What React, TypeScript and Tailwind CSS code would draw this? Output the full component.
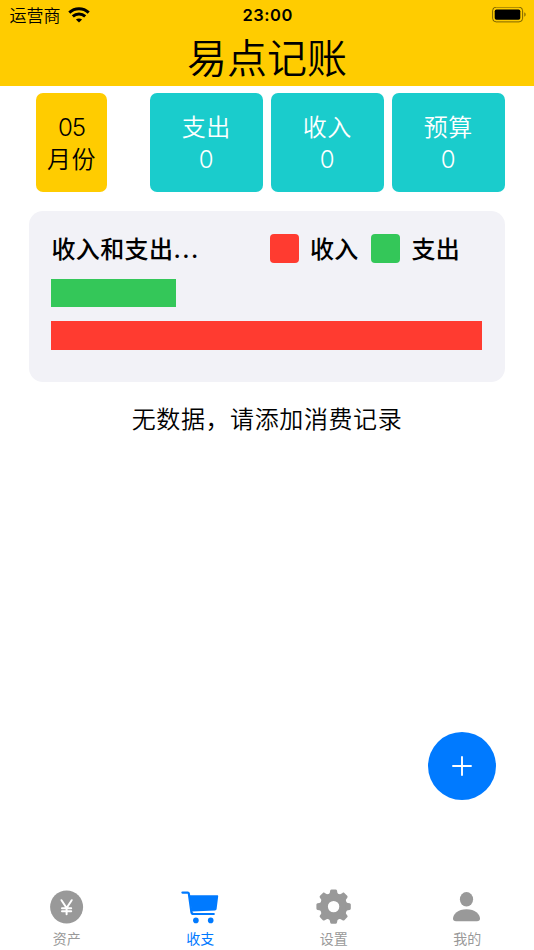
const stats = [
  { label: "支出", value: 0 },
  { label: "收入", value: 0 },
  { label: "预算", value: 0 },
];

function WifiIcon() {
  return (
    <svg width="22" height="16" viewBox="0 0 22 16" fill="none" stroke="black" strokeWidth="3">
      <path d="M1.3 5.6C6.8.4 15.2.4 20.7 5.6" />
      <path d="M4.8 9.4c3.6-3.3 8.8-3.3 12.4 0" />
      <path d="M11 15.6 7.9 12.5c1.7-1.5 4.5-1.5 6.2 0z" fill="black" stroke="none" />
    </svg>
  );
}

function BatteryIcon() {
  return (
    <svg width="34" height="16" viewBox="0 0 34 16">
      <rect x=".6" y=".1" width="30" height="14.8" rx="3.6" fill="none" stroke="black" strokeOpacity=".5" />
      <rect x="2.7" y="2.4" width="25.6" height="10.3" rx="1.8" />
      <path d="M32.3 5.3c1.8.8 1.8 3.6 0 4.4z" fillOpacity=".5" />
    </svg>
  );
}

function YenIcon() {
  return (
    <svg width="36" height="36" viewBox="0 0 36 36">
      <circle cx="17.6" cy="18" r="16.5" fill="#999" />
      <path
        d="m12.5 11.2 5.1 7.8 5.1-7.8M17.6 19v6.3M13 19.200h9.200M13 22.300h9.200"
        fill="none"
        stroke="white"
        strokeWidth="2"
        strokeLinecap="round"
      />
    </svg>
  );
}

function CartIcon() {
  return (
    <svg width="38" height="36" viewBox="0 0 38 36" fill="#007aff">
      <path d="M8 6.2h28.2c.7 0 1.1.5 1 1.1l-1.6 12.7c-.1.8-.8 1.4-1.6 1.500L11 22.600z" />
      <path
        d="M1.400 3.600h5.400c.6 0 .9.300 1 .8l2.600 18.600c.2 1.400.9 2 2.200 2h20.200"
        fill="none"
        stroke="#007aff"
        strokeWidth="2.2"
        strokeLinecap="round"
      />
      <circle cx="14.9" cy="31.4" r="2.8" />
      <circle cx="29.7" cy="31.4" r="2.8" />
    </svg>
  );
}

function GearIcon() {
  return (
    <svg width="36" height="36" viewBox="-17.6 -17.6 36 36">
      <circle r="9.7" fill="none" stroke="#999" strokeWidth="8" />
      {[0, 45, 90, 135, 180, 225, 270, 315].map((angle) => (
        <path
          key={angle}
          d="M-5.4-11.8c1-.6 1.5-1.4 1.7-2.6l.3-1.6c.2-.8.7-1.2 1.4-1.2h4c.7 0 1.2.4 1.4 1.2l.3 1.6c.2 1.2.7 2 1.7 2.6z"
          transform={`rotate(${angle})`}
          fill="#999"
        />
      ))}
    </svg>
  );
}

function PersonIcon() {
  return (
    <svg width="36" height="36" viewBox="0 0 36 36" fill="#999">
      <ellipse cx="17.5" cy="10.3" rx="6.6" ry="7.2" />
      <path d="M7 32.3c-2 0-3-.8-3-2.7 0-4.3 5-9.4 13.5-9.4s13.5 5.1 13.5 9.4c0 1.9-1 2.7-3 2.7z" />
    </svg>
  );
}

const tabs = [
  { label: "资产", icon: <YenIcon /> },
  { label: "收支", icon: <CartIcon />, active: true },
  { label: "设置", icon: <GearIcon /> },
  { label: "我的", icon: <PersonIcon /> },
];

export default function App() {
  return (
    <div className="relative flex h-[950px] w-[534px] flex-col overflow-hidden bg-white font-['Inter','Noto_Sans_CJK_SC',sans-serif] text-black">
      <header className="h-[85.5px] shrink-0 bg-[#ffcc00]">
        <div className="grid h-[29px] grid-cols-3 items-center pr-2 pl-[9.5px]">
          <div className="flex items-center gap-[7px] text-[17px] leading-none">
            <span className="pt-[3px] font-[350]">运营商</span>
            <WifiIcon />
          </div>
          <span className="pt-0.5 text-center text-[16.5px] leading-none font-semibold tracking-[0.5px]">23:00</span>
          <div className="flex justify-end">
            <BatteryIcon />
          </div>
        </div>
        <h1 className="pt-[2px] text-center text-[40px] leading-[56px] font-[350]">易点记账</h1>
      </header>

      <section className="mt-[7.5px] flex h-[99px] shrink-0 pl-9 text-center text-[24px] leading-8 font-[350] tracking-[0.4px]">
        <div className="mr-[42.5px] flex w-[71px] flex-col justify-center rounded-[7px] bg-[#ffcc00] pt-[2px]">
          <span className="tracking-[-1px]">05</span>
          <span>月份</span>
        </div>
        <div className="flex gap-[7.5px] text-white">
          {stats.map((s) => (
            <div key={s.label} className="flex w-[113.5px] flex-col justify-center rounded-[7px] bg-[#1acccc] pt-[2px]">
              <span>{s.label}</span>
              <span>{s.value}</span>
            </div>
          ))}
        </div>
      </section>

      <section className="mr-[29px] ml-[28.5px] mt-[19px] h-[171px] shrink-0 rounded-[14px] bg-[#f2f2f7] px-[22.9px] pt-[23px]">
        <div className="flex h-[29px] items-center text-[24px] font-medium tracking-[0.4px]">
          <span className="w-[219px] pt-[2px]">
            收入和支出<span className="tracking-[1.5px]">...</span>
          </span>
          <span className="h-[28.5px] w-[28.5px] rounded-[4px] bg-[#ff3b30]" />
          <span className="ml-[11px] w-[61.5px] pt-[2px]">收入</span>
          <span className="h-[28.5px] w-[28.5px] rounded-[4px] bg-[#34c759]" />
          <span className="ml-[11.5px] pt-[2px]">支出</span>
        </div>
        <div className="mt-[15.5px] h-[28.5px] w-[125px] bg-[#34c759]" />
        <div className="mt-[14px] h-[28.5px] w-[431px] bg-[#ff3b30]" />
      </section>

      <p className="mt-[20px] text-center text-[24px] leading-9 font-[350] tracking-[0.6px]">无数据，请添加消费记录</p>

      <button className="absolute top-[732px] left-[428.4px] flex h-[68px] w-[68px] items-center justify-center rounded-full bg-[#007aff]">
        <svg width="20" height="20" viewBox="0 0 20 20" stroke="white" strokeWidth="1.9" strokeLinecap="round">
          <path d="M10 1v18M1 10h18" />
        </svg>
      </button>

      <nav className="mt-auto grid h-[61.5px] grid-cols-4">
        {tabs.map((tab) => (
          <div
            key={tab.label}
            className={`flex flex-col items-center text-[14px] leading-[28px] ${tab.active ? "text-[#007aff]" : "text-[#999999]"}`}
          >
            {tab.icon}
            <span>{tab.label}</span>
          </div>
        ))}
      </nav>
    </div>
  );
}
